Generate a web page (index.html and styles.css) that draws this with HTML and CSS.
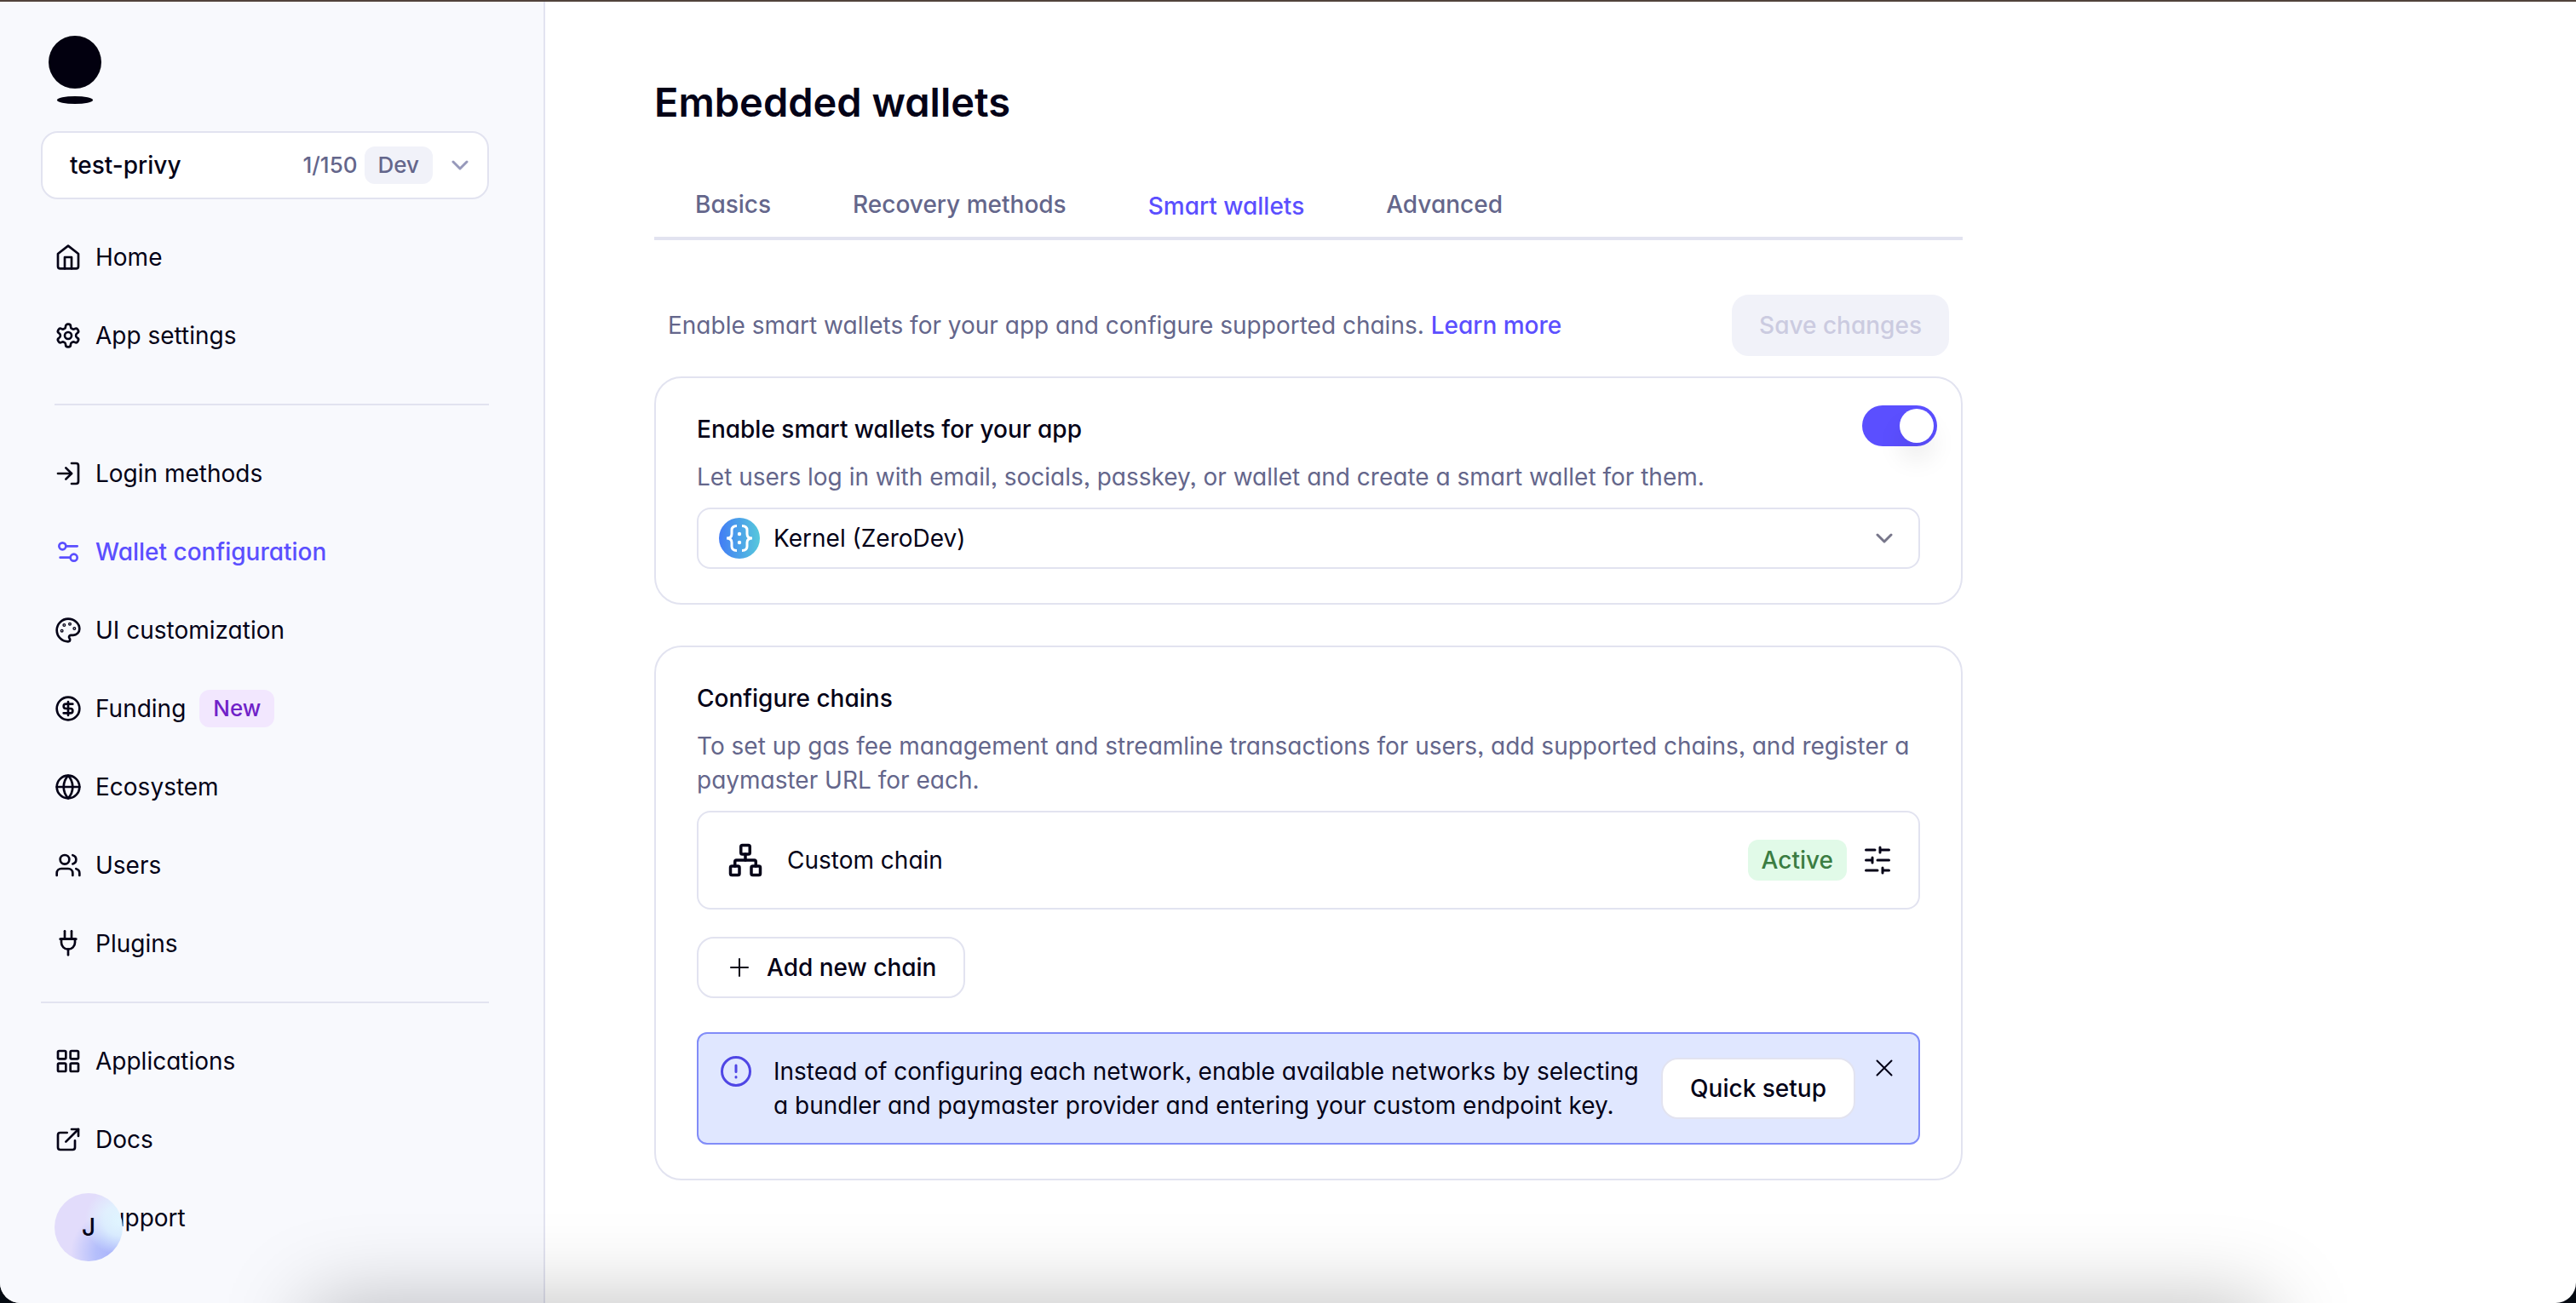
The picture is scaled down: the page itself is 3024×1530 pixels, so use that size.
FILE: index.html
```html
<!DOCTYPE html>
<html lang="en">
<head>
<meta charset="utf-8">
<title>Embedded wallets</title>
<meta name="viewport" content="width=device-width, initial-scale=1">
<link rel="stylesheet" href="styles.css">
</head>
<body>
<div class="window">
  <aside class="sidebar">
    <a class="logo" href="#" aria-label="Dashboard">
      <svg width="62" height="80" viewBox="0 0 62 80" aria-hidden="true"><circle cx="31" cy="31" r="31"/><ellipse cx="31" cy="75.500" rx="21" ry="4.500"/></svg>
    </a>
    <button class="switcher" type="button">
      <span class="switcher-name">test-privy</span>
      <span class="switcher-count">1/150</span>
      <span class="badge badge-dev">Dev</span>
      <svg class="chevron" width="20" height="12" viewBox="0 0 20 12" aria-hidden="true"><path d="M2 2l8 8 8-8"/></svg>
    </button>
    <nav class="nav" aria-label="Main">
      <ul class="nav-group">
        <li><a class="nav-link" href="#"><svg class="icon" viewBox="0 0 24 24" aria-hidden="true"><path d="M3 9l9-7 9 7v11a2 2 0 0 1-2 2H5a2 2 0 0 1-2-2z"/><path d="M9 22V12h6v10"/></svg>Home</a></li>
        <li><a class="nav-link" href="#"><svg class="icon" viewBox="0 0 24 24" aria-hidden="true"><path d="M12.220 2h-.44a2 2 0 0 0-2 2v.18a2 2 0 0 1-1 1.730l-.43.25a2 2 0 0 1-2 0l-.15-.08a2 2 0 0 0-2.730.73l-.22.38a2 2 0 0 0 .73 2.730l.15.1a2 2 0 0 1 1 1.720v.51a2 2 0 0 1-1 1.740l-.15.09a2 2 0 0 0-.73 2.730l.22.38a2 2 0 0 0 2.730.73l.15-.08a2 2 0 0 1 2 0l.43.25a2 2 0 0 1 1 1.730V20a2 2 0 0 0 2 2h.44a2 2 0 0 0 2-2v-.18a2 2 0 0 1 1-1.730l.43-.25a2 2 0 0 1 2 0l.15.08a2 2 0 0 0 2.730-.73l.22-.39a2 2 0 0 0-.73-2.730l-.15-.08a2 2 0 0 1-1-1.740v-.5a2 2 0 0 1 1-1.740l.15-.09a2 2 0 0 0 .73-2.730l-.22-.38a2 2 0 0 0-2.730-.73l-.15.08a2 2 0 0 1-2 0l-.43-.25a2 2 0 0 1-1-1.730V4a2 2 0 0 0-2-2z"/><circle cx="12" cy="12" r="3"/></svg>App settings</a></li>
      </ul>
      <ul class="nav-group nav-group-product">
        <li><a class="nav-link" href="#"><svg class="icon" viewBox="0 0 24 24" aria-hidden="true"><path d="M15 3h4a2 2 0 0 1 2 2v14a2 2 0 0 1-2 2h-4"/><path d="M10 17l5-5-5-5"/><path d="M15 12H3"/></svg>Login methods</a></li>
        <li><a class="nav-link nav-link-active" href="#" aria-current="page"><svg class="icon" viewBox="0 0 24 24" aria-hidden="true"><circle cx="7" cy="7" r="3"/><path d="M10 7h10"/><circle cx="17" cy="17" r="3"/><path d="M14 17H5"/></svg>Wallet configuration</a></li>
        <li><a class="nav-link" href="#"><svg class="icon" viewBox="0 0 24 24" aria-hidden="true"><circle cx="13.500" cy="6.500" r=".5"/><circle cx="17.500" cy="10.500" r=".5"/><circle cx="8.500" cy="7.500" r=".5"/><circle cx="6.500" cy="12.500" r=".5"/><path d="M12 2C6.500 2 2 6.500 2 12s4.500 10 10 10c.926 0 1.648-.746 1.648-1.688 0-.437-.18-.835-.437-1.125-.29-.289-.438-.652-.438-1.125a1.640 1.640 0 0 1 1.668-1.668h1.996c3.051 0 5.555-2.503 5.555-5.554C21.965 6.012 17.461 2 12 2z"/></svg>UI customization</a></li>
        <li><a class="nav-link" href="#"><svg class="icon" viewBox="0 0 24 24" aria-hidden="true"><circle cx="12" cy="12" r="10"/><path d="M16 8h-6a2 2 0 1 0 0 4h4a2 2 0 1 1 0 4H8"/><path d="M12 18V6"/></svg>Funding<span class="badge badge-new">New</span></a></li>
        <li><a class="nav-link" href="#"><svg class="icon" viewBox="0 0 24 24" aria-hidden="true"><circle cx="12" cy="12" r="10"/><path d="M2 12h20"/><path d="M12 2a15.300 15.300 0 0 1 4 10 15.300 15.300 0 0 1-4 10 15.300 15.300 0 0 1-4-10 15.300 15.300 0 0 1 4-10z"/></svg>Ecosystem</a></li>
        <li><a class="nav-link" href="#"><svg class="icon" viewBox="0 0 24 24" aria-hidden="true"><path d="M16 21v-2a4 4 0 0 0-4-4H6a4 4 0 0 0-4 4v2"/><circle cx="9" cy="7" r="4"/><path d="M22 21v-2a4 4 0 0 0-3-3.870"/><path d="M16 3.130a4 4 0 0 1 0 7.750"/></svg>Users</a></li>
        <li><a class="nav-link" href="#"><svg class="icon" viewBox="0 0 24 24" aria-hidden="true"><path d="M12 22v-5"/><path d="M9 7V1"/><path d="M15 7V1"/><path d="M5 8h14"/><path d="M18 8v3a6 6 0 0 1-12 0V8z"/></svg>Plugins</a></li>
      </ul>
      <ul class="nav-group nav-group-links">
        <li><a class="nav-link" href="#"><svg class="icon" viewBox="0 0 24 24" aria-hidden="true"><rect x="3" y="3" width="7" height="7" rx="1"/><rect x="14" y="3" width="7" height="7" rx="1"/><rect x="14" y="14" width="7" height="7" rx="1"/><rect x="3" y="14" width="7" height="7" rx="1"/></svg>Applications</a></li>
        <li><a class="nav-link" href="#"><svg class="icon" viewBox="0 0 24 24" aria-hidden="true"><path d="M18 13v6a2 2 0 0 1-2 2H5a2 2 0 0 1-2-2V8a2 2 0 0 1 2-2h6"/><path d="M15 3h6v6"/><path d="M10 14L21 3"/></svg>Docs</a></li>
        <li><a class="nav-link" href="#"><svg class="icon" viewBox="0 0 24 24" aria-hidden="true"><path d="M21 11.500a8.380 8.380 0 0 1-.9 3.800 8.500 8.500 0 0 1-7.600 4.700 8.380 8.380 0 0 1-3.800-.9L3 21l1.900-5.700a8.380 8.380 0 0 1-.9-3.800 8.500 8.500 0 0 1 4.700-7.600 8.380 8.380 0 0 1 3.800-.9h.5a8.480 8.480 0 0 1 8 8z"/></svg>Support</a></li>
      </ul>
    </nav>
    <button class="avatar" type="button" aria-label="Account">J</button>
  </aside>

  <main class="main">
    <div class="content">
      <h1 class="title">Embedded wallets</h1>
      <nav class="tabs" aria-label="Wallet sections">
        <a class="tab" href="#">Basics</a>
        <a class="tab" href="#">Recovery methods</a>
        <a class="tab tab-active" href="#" aria-current="page">Smart wallets</a>
        <a class="tab" href="#">Advanced</a>
      </nav>

      <div class="intro">
        <p>Enable smart wallets for your app and configure supported chains. <a class="learn" href="#">Learn more</a></p>
        <button class="button button-save" type="button" disabled>Save changes</button>
      </div>

      <section class="card">
        <div class="card-head">
          <h2 class="card-title"><label for="enable">Enable smart wallets for your app</label></h2>
          <input class="toggle" id="enable" type="checkbox" role="switch" checked>
        </div>
        <p class="card-text">Let users log in with email, socials, passkey, or wallet and create a smart wallet for them.</p>
        <div class="picker">
          <svg class="picker-logo" width="48" height="48" viewBox="0 0 48 48" aria-hidden="true">
            <defs><linearGradient id="kernel" x1="0" y1="0" x2="1" y2="0"><stop offset="0" stop-color="#427cf5"/><stop offset="1" stop-color="#56c8dc"/></linearGradient></defs>
            <circle cx="24" cy="24" r="24" fill="url(#kernel)"/>
            <g fill="none" stroke="#fff" stroke-width="3"><path d="M21 9.500c-4 0-6 1.500-6 5v4.500c0 3-2 5-6 5 4 0 6 2 6 5v4.500c0 3.500 2 5 6 5"/><path d="M27 9.500c4 0 6 1.500 6 5v4.500c0 3 2 5 6 5-4 0-6 2-6 5v4.500c0 3.500-2 5-6 5"/></g>
            <circle cx="24" cy="19" r="2.200" fill="#fff"/><circle cx="24" cy="29" r="2.200" fill="#fff"/>
          </svg>
          <select class="picker-select" aria-label="Smart wallet type"><option>Kernel (ZeroDev)</option></select>
          <svg class="chevron picker-chevron" width="20" height="12" viewBox="0 0 20 12" aria-hidden="true"><path d="M2 2l8 8 8-8"/></svg>
        </div>
      </section>

      <section class="card">
        <h2 class="card-title">Configure chains</h2>
        <p class="card-text">To set up gas fee management and streamline transactions for users, add supported chains, and register a paymaster URL for each.</p>
        <div class="chain">
          <svg class="chain-icon" viewBox="0 0 24 24" aria-hidden="true"><rect x="16" y="16" width="6" height="6" rx="1"/><rect x="2" y="16" width="6" height="6" rx="1"/><rect x="9" y="2" width="6" height="6" rx="1"/><path d="M5 16v-3a1 1 0 0 1 1-1h12a1 1 0 0 1 1 1v3"/><path d="M12 12V8"/></svg>
          <span class="chain-name">Custom chain</span>
          <span class="badge badge-active">Active</span>
          <button class="icon-button" type="button" aria-label="Chain settings"><svg class="sliders-icon" viewBox="0 0 24 24" aria-hidden="true"><path d="M21 4h-7M10 4H3M21 12h-9M8 12H3M21 20h-5M12 20H3M14 2v4M8 10v4M16 18v4"/></svg></button>
        </div>
        <button class="button button-add" type="button"><svg width="24" height="24" viewBox="0 0 24 24" aria-hidden="true"><path d="M12 2v20M2 12h20"/></svg>Add new chain</button>
        <div class="callout">
          <svg class="callout-icon" width="40" height="40" viewBox="0 0 40 40" aria-hidden="true"><circle cx="20" cy="20" r="16.500"/><path d="M20 13v7.500M20 26.500v.5"/></svg>
          <p class="callout-text">Instead of configuring each network, enable available networks by selecting a bundler and paymaster provider and entering your custom endpoint key.</p>
          <button class="button button-quick" type="button">Quick setup</button>
          <button class="icon-button button-close" type="button" aria-label="Dismiss"><svg width="20" height="20" viewBox="0 0 20 20" aria-hidden="true"><path d="M1.500 1.500l17 17M18.500 1.500l-17 17"/></svg></button>
        </div>
      </section>
    </div>
  </main>
  <div class="dock-shadow"></div>
</div>
</body>
</html>
```
FILE: styles.css
```css
:root {
  --ink: #040217;
  --muted: #64668b;
  --line: #e2e3f0;
  --accent: #5b4fff;
  --soft: #f1f2f9;
}

* {
  box-sizing: border-box;
}

html {
  background: #050a12;
}

body {
  margin: 0;
  color: var(--ink);
  font-family: Inter, "Liberation Sans", sans-serif;
  font-feature-settings: "cv11", "ss03";
  font-size: 28px;
  line-height: 40px;
}

h1,
h2,
p,
ul {
  margin: 0;
  padding: 0;
}

ul {
  list-style: none;
}

a {
  color: inherit;
  text-decoration: none;
}

button,
select {
  margin: 0;
  padding: 0;
  border: 0;
  background: none;
  color: inherit;
  font: inherit;
  font-feature-settings: inherit;
}

svg {
  flex: none;
}

.window {
  position: relative;
  display: flex;
  min-height: 100vh;
  overflow: hidden;
  border-top: 2px solid #51433b;
  border-radius: 0 0 24px 24px;
  background: #fff;
}

/* Sidebar */
.sidebar {
  position: relative;
  flex: none;
  width: 640px;
  padding: 40px 64px 68px 48px;
  border-right: 2px solid var(--line);
  background: #f8f9fd;
}

.logo {
  display: block;
  height: 80px;
  margin: 0 0 32px 9px;
}

.logo svg {
  display: block;
  fill: #02000f;
}

.switcher {
  display: flex;
  align-items: center;
  width: 100%;
  height: 80px;
  padding: 0 22px 0 32px;
  border: 2px solid var(--line);
  border-radius: 20px;
  background: #fff;
}

.switcher-name {
  flex: 1;
  text-align: left;
  font-weight: 500;
}

.switcher-count {
  margin-right: 8px;
  color: var(--muted);
  font-size: 26px;
  font-weight: 500;
}

.badge {
  padding: 4px 16px;
  border-radius: 12px;
  font-size: 26px;
  line-height: 36px;
  font-weight: 500;
}

.badge-dev {
  margin-right: 22px;
  background: var(--soft);
  color: var(--muted);
}

.badge-new {
  background: #f2e7fe;
  color: #7022c8;
}

.badge-active {
  font-size: 28px;
  line-height: 40px;
  background: #e1fae8;
  color: #3b7d42;
}

.chevron {
  fill: none;
  stroke: #9799bb;
  stroke-width: 3;
  stroke-linecap: round;
  stroke-linejoin: round;
}

.nav-group {
  display: grid;
  gap: 32px;
  padding: 38px 0 50px 16px;
}

.nav-group-product {
  padding: 52px 0 38px 16px;
  background: linear-gradient(var(--line), var(--line)) 16px 0 / 100% 2px no-repeat;
}

.nav-group-links {
  padding: 38px 0 0 16px;
  border-top: 2px solid var(--line);
}

.nav-link {
  display: flex;
  align-items: center;
  gap: 16px;
  height: 60px;
}

.nav-link-active {
  color: var(--accent);
  font-weight: 500;
}

.icon {
  width: 32px;
  height: 32px;
  fill: none;
  stroke: currentColor;
  stroke-width: 2;
  stroke-linecap: round;
  stroke-linejoin: round;
}

.avatar {
  position: absolute;
  left: 64px;
  bottom: 49px;
  width: 80px;
  height: 80px;
  border-radius: 50%;
  background:
    radial-gradient(circle at 95% 40%, #e0f5ff 0, #e0f5ffcc 20%, #e0f5ff00 45%),
    radial-gradient(circle at 85% 88%, #aab4fb 0, #b5bffb 20%, #b5bffb00 50%),
    #e2dcfb;
  font-weight: 500;
}

/* Page */
.main {
  flex: 1;
  min-width: 0;
  padding: 88px 128px 144px;
}

.content {
  max-width: 1536px;
}

.title {
  font-size: 47px;
  line-height: 60px;
  font-weight: 600;
}

.tabs {
  display: flex;
  margin-top: 52px;
  border-bottom: 4px solid var(--line);
  color: var(--muted);
  font-weight: 500;
}

.tab {
  padding: 18px 48px;
}

.tab-active {
  padding: 20px 48px 16px;
  color: var(--accent);
}

.intro {
  display: flex;
  align-items: center;
  justify-content: space-between;
  gap: 24px;
  margin: 64px 16px 24px;
  color: var(--muted);
}

.learn {
  color: var(--accent);
  font-weight: 500;
}

.button {
  display: flex;
  align-items: center;
  justify-content: center;
  height: 72px;
  padding: 0 30px;
  border: 2px solid var(--line);
  border-radius: 20px;
  background: #fff;
  font-weight: 500;
  white-space: nowrap;
}

.button-save {
  border-color: var(--soft);
  background: var(--soft);
  color: #cbcbe0;
}

.card {
  display: flex;
  flex-direction: column;
  gap: 16px;
  padding: 40px 48px;
  border: 2px solid var(--line);
  border-radius: 32px;
}

.card + .card {
  margin-top: 48px;
}

.card-head {
  display: flex;
  align-items: center;
  justify-content: space-between;
  height: 40px;
  margin-right: -20px;
}

.card-title {
  font-size: 28px;
  line-height: 40px;
  font-weight: 500;
}

.card-text {
  color: var(--muted);
}

.toggle {
  display: flex;
  align-self: flex-end;
  justify-content: flex-end;
  width: 88px;
  height: 48px;
  margin: 0;
  padding: 4px;
  border-radius: 24px;
  appearance: none;
  background: var(--accent);
}

.toggle::before {
  width: 40px;
  height: 40px;
  border-radius: 50%;
  background: #fff;
  box-shadow: 0 20px 30px rgba(0, 0, 0, 0.08);
  content: "";
}

.picker {
  position: relative;
  display: grid;
  align-items: center;
}

.picker-select {
  width: 100%;
  height: 72px;
  padding: 0 80px 0 88px;
  border: 2px solid var(--line);
  border-radius: 16px;
  appearance: none;
  background: #fff;
}

.picker-logo {
  position: absolute;
  left: 26px;
}

.picker-chevron {
  position: absolute;
  right: 32px;
  stroke: #77768a;
}

.chain {
  display: flex;
  align-items: center;
  height: 116px;
  padding: 0 30px 0 34px;
  border: 2px solid var(--line);
  border-radius: 16px;
}

.chain-icon {
  width: 42px;
  height: 42px;
  margin-right: 28px;
  fill: none;
  stroke: currentColor;
  stroke-width: 2;
  stroke-linecap: round;
  stroke-linejoin: round;
}

.chain-name {
  flex: 1;
}

.icon-button {
  display: flex;
  align-items: center;
  justify-content: center;
}

.icon-button svg {
  fill: none;
  stroke: currentColor;
  stroke-width: 2;
  stroke-linecap: round;
}

.sliders-icon {
  width: 36px;
  height: 36px;
  margin-left: 18px;
}

.button-add {
  align-self: flex-start;
  gap: 20px;
  margin-top: 16px;
  padding: 0 32px 0 36px;
}

.button-add svg {
  stroke: currentColor;
  stroke-width: 2;
  stroke-linecap: round;
}

.callout {
  display: flex;
  gap: 24px;
  margin-top: 24px;
  padding: 24px 30px 24px 24px;
  border: 2px solid #818cf8;
  border-radius: 12px;
  background: #e0e7ff;
}

.callout-icon {
  fill: none;
  stroke: #4f46e5;
  stroke-width: 3;
  stroke-linecap: round;
}

.callout-text {
  flex: 1;
}

.button-quick {
  align-self: center;
  padding: 0 32px;
}

.button-close {
  height: 32px;
}

/* Soft glow rising from below the window's lower edge */
.dock-shadow {
  position: absolute;
  top: 100%;
  right: 12%;
  left: 12%;
  height: 200px;
  box-shadow: 0 0 100px rgba(0, 0, 0, 0.26);
  pointer-events: none;
}
```
